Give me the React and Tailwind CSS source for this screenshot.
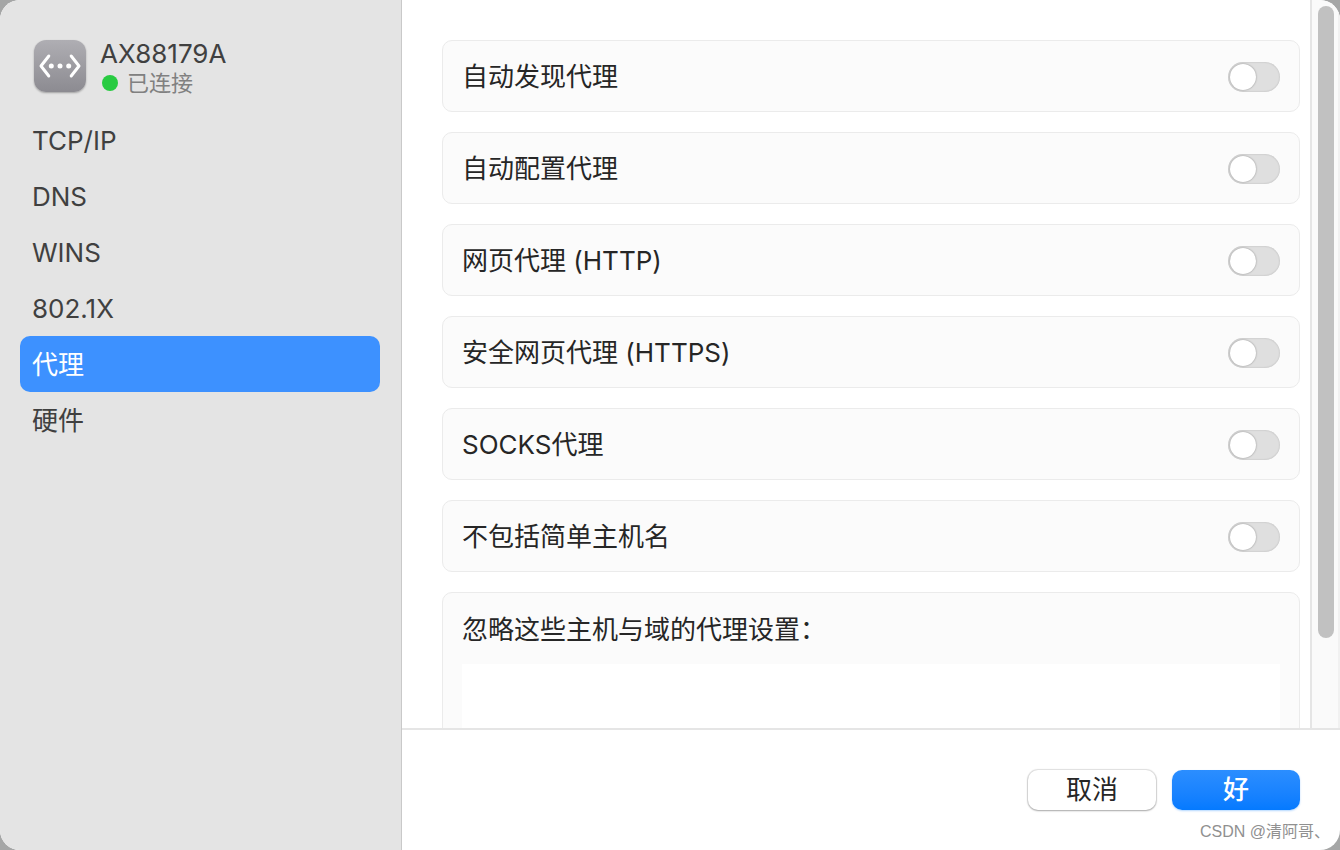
import { useState } from 'react';

const NAV = ['TCP/IP', 'DNS', 'WINS', '802.1X', '代理', '硬件'];

const PROXIES = [
  { id: 'discovery', label: '自动发现代理' },
  { id: 'pac', label: '自动配置代理' },
  { id: 'http', label: '网页代理 (HTTP)' },
  { id: 'https', label: '安全网页代理 (HTTPS)' },
  { id: 'socks', label: 'SOCKS代理' },
  { id: 'simple', label: '不包括简单主机名' },
];

function EthernetIcon() {
  return (
    <span className="flex h-[52px] w-[52px] shrink-0 items-center justify-center rounded-xl bg-linear-to-b from-[#afaeb3] to-[#8c8b91] shadow-[0_1px_2px_rgba(0,0,0,0.3)]">
      <svg viewBox="0 0 52 52" className="h-full w-full" fill="none" aria-hidden="true">
        <path
          d="M14.8 16 7 26l7.8 10M37.2 16 45 26l-7.8 10"
          stroke="#fff"
          strokeWidth="3"
          strokeLinecap="round"
          strokeLinejoin="round"
        />
        <circle cx="17.3" cy="26" r="2.5" fill="#fff" />
        <circle cx="26" cy="26" r="2.5" fill="#fff" />
        <circle cx="34.7" cy="26" r="2.5" fill="#fff" />
      </svg>
    </span>
  );
}

function Sidebar({ active, onSelect }) {
  return (
    <aside className="w-[402px] shrink-0 border-r border-[#c9c9c9] bg-[#e4e4e4] pt-9 pr-[21px] pl-5 text-[#404040]">
      <div className="flex items-center gap-[14px] pl-[14px]">
        <EthernetIcon />
        <div>
          <p className="pt-0.5 leading-8">AX88179A</p>
          <p className="flex items-center gap-[9px] pl-0.5 text-[22px] leading-[26px] text-[#808080]">
            <span className="h-4 w-4 rounded-full bg-[#28cb41]" />
            已连接
          </p>
        </div>
      </div>
      <nav className="mt-4 flex flex-col">
        {NAV.map(item => (
          <button
            key={item}
            type="button"
            onClick={() => onSelect(item)}
            className={`h-14 rounded-[10px] px-3 pt-0.5 text-left ${active === item ? 'bg-[#3d91ff] text-white' : ''}`}
          >
            {item}
          </button>
        ))}
      </nav>
    </aside>
  );
}

function ProxyRow({ id, label, checked, onToggle }) {
  return (
    <div className="flex h-[72px] shrink-0 items-center justify-between rounded-[10px] border border-[#ebebeb] bg-[#fbfbfb] px-[19px] pt-0.5">
      <label htmlFor={id}>{label}</label>
      <input
        id={id}
        type="checkbox"
        role="switch"
        checked={checked}
        onChange={() => onToggle(id)}
        className="h-[30px] w-[52px] appearance-none rounded-full bg-[#dfdfdf] p-0.5 shadow-[inset_0_0_2px_rgba(0,0,0,0.2)] before:block before:h-[26px] before:w-[26px] before:rounded-full before:bg-white before:shadow-[0_0_2px_rgba(0,0,0,0.4)] checked:bg-[#0a7aff] checked:before:translate-x-[22px]"
      />
    </div>
  );
}

export default function App() {
  const [active, setActive] = useState('代理');
  const [enabled, setEnabled] = useState({});
  const [bypass, setBypass] = useState('');

  const toggle = id => setEnabled(prev => ({ ...prev, [id]: !prev[id] }));

  return (
    <div className="h-screen bg-[#a5a6a6] font-['Inter','Noto_Sans_CJK_SC',sans-serif] text-[26px] leading-9 text-[#262626]">
      <div className="flex h-full overflow-hidden rounded-[20px] bg-white">
        <Sidebar active={active} onSelect={setActive} />

        <main className="relative flex min-w-0 flex-1 flex-col">
          <div className="flex min-h-0 flex-1 border-b-2 border-[#e5e5e5]">
            <div className="flex min-w-0 flex-1 flex-col gap-5 overflow-hidden pt-10 pr-[10px] pl-10">
              {PROXIES.map(p => (
                <ProxyRow key={p.id} {...p} checked={!!enabled[p.id]} onToggle={toggle} />
              ))}
              <div className="shrink-0 rounded-[10px] border border-[#ebebeb] bg-[#fbfbfb] px-[19px] pb-5">
                <label htmlFor="bypass" className="flex h-[71px] items-center pt-0.5">忽略这些主机与域的代理设置：</label>
                <textarea
                  id="bypass"
                  value={bypass}
                  onChange={e => setBypass(e.target.value)}
                  className="block h-32 w-full resize-none bg-white outline-none"
                />
              </div>
            </div>
            {/* scrollbar */}
            <div className="w-[30px] shrink-0 border-r-2 border-l-2 border-r-[#f1f1f1] border-l-[#e5e5e5] bg-[#fafafa] px-1.5 pt-1.5">
              <div className="h-[632px] w-4 rounded-full bg-[#c1c1c1]" />
            </div>
          </div>

          <footer className="flex h-[120px] shrink-0 items-center justify-end gap-4 px-10">
            <button
              type="button"
              className="h-10 w-32 rounded-[10px] bg-white shadow-[0_0_1px_1px_rgba(0,0,0,0.12),0_1px_2px_rgba(0,0,0,0.25)]"
            >
              取消
            </button>
            <button
              type="button"
              className="h-10 w-32 rounded-[10px] bg-linear-to-b from-[#2b8eff] to-[#047aff] font-medium text-white shadow-[0_1px_2px_rgba(0,122,255,0.3)]"
            >
              好
            </button>
          </footer>

          <p className="absolute right-2.5 bottom-1 font-['Liberation_Sans','Noto_Sans_CJK_SC',sans-serif] text-base leading-7 text-[#909090]">
            CSDN @清阿哥、
          </p>
        </main>
      </div>
    </div>
  );
}
